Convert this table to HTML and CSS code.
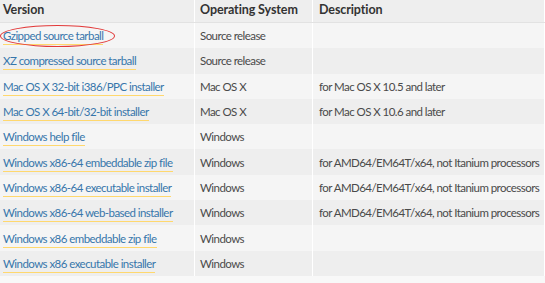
FILE: index.html
```html
<!DOCTYPE html>
<html>
<head>
<meta charset="utf-8">
<link rel="stylesheet" href="styles.css">
</head>
<body>
<table class="files">
  <thead>
    <tr><th class="c1">Version</th><th class="c2">Operating System</th><th class="c3">Description</th></tr>
  </thead>
  <tbody>
    <tr><td><span class="circled"><a href="#">Gzipped source tarball</a></span></td><td>Source release</td><td></td></tr>
    <tr><td><a href="#">XZ compressed source tarball</a></td><td>Source release</td><td></td></tr>
    <tr><td><a href="#">Mac OS X 32-bit i386/PPC installer</a></td><td>Mac OS X</td><td>for Mac OS X 10.5 and later</td></tr>
    <tr><td><a href="#">Mac OS X 64-bit/32-bit installer</a></td><td>Mac OS X</td><td>for Mac OS X 10.6 and later</td></tr>
    <tr><td><a href="#">Windows help file</a></td><td>Windows</td><td></td></tr>
    <tr><td><a href="#">Windows x86-64 embeddable zip file</a></td><td>Windows</td><td>for AMD64/EM64T/x64, not Itanium processors</td></tr>
    <tr><td><a href="#">Windows x86-64 executable installer</a></td><td>Windows</td><td>for AMD64/EM64T/x64, not Itanium processors</td></tr>
    <tr><td><a href="#">Windows x86-64 web-based installer</a></td><td>Windows</td><td>for AMD64/EM64T/x64, not Itanium processors</td></tr>
    <tr><td><a href="#">Windows x86 embeddable zip file</a></td><td>Windows</td><td></td></tr>
    <tr><td><a href="#">Windows x86 executable installer</a></td><td>Windows</td><td></td></tr>
  </tbody>
</table>
</body>
</html>
```
FILE: styles.css
```css
html, body {
  margin: 0;
  padding: 0;
  background: #f8f8f8;
}
body {
  font-family: Lato, "Liberation Sans", sans-serif;
  font-size: 11.5px;
  letter-spacing: -0.55px;
  color: #4a4a4a;
  overflow: hidden;
}
.files {
  border-collapse: collapse;
  table-layout: fixed;
  width: 547px;
  margin-left: -2px;
}
.files th, .files td {
  text-align: left;
  padding: 0 0 0 5px;
  border-right: 1px solid #ffffff;
  white-space: nowrap;
  overflow: hidden;
}
.files th {
  height: 19px;
  background: #eeeeee;
  font-weight: bold;
  font-size: 12.5px;
  color: #333;
  border-bottom: 1px solid #e2e2e2;
  vertical-align: middle;
  padding-bottom: 3px;
  letter-spacing: -0.1px;
}
.files td {
  height: 25.3px;
  vertical-align: middle;
}
.files .c1 { width: 191px; }
.files .c2 { width: 112px; }
.files .c3 { padding-left: 6px; }
.files td:nth-child(3) { padding-left: 6px; }
.files tbody tr:nth-child(odd) td { background: #f5f5f5; }
.files tbody tr:nth-child(even) td { background: #eeeeee; }
.files a {
  color: #3776ab;
  text-decoration: none;
  border-bottom: 1px solid #ffd86e;
  padding-bottom: 2px;
}
.circled {
  position: relative;
  display: inline-block;
}
.circled::after {
  content: "";
  position: absolute;
  left: -3px;
  right: -12px;
  top: -4px;
  bottom: -5px;
  border: 1px solid #e23a3a;
  border-radius: 50%;
}
```
